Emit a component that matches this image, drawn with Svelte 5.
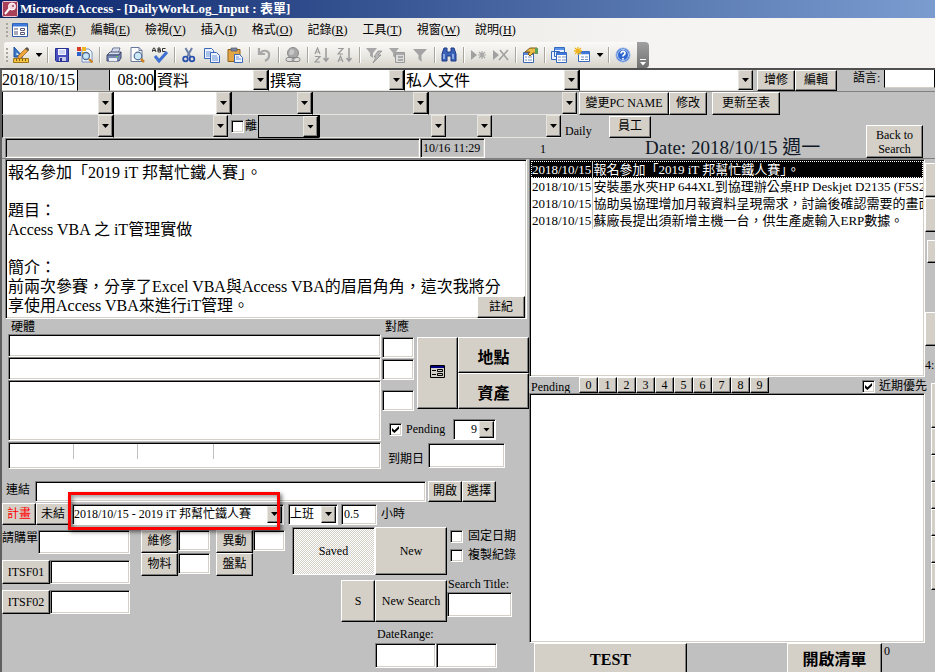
<script lang="ts">
    const menus = [
        ['檔案', 'F'],
        ['編輯', 'E'],
        ['檢視', 'V'],
        ['插入', 'I'],
        ['格式', 'O'],
        ['記錄', 'R'],
        ['工具', 'T'],
        ['視窗', 'W'],
        ['說明', 'H']
    ];

    // '|' is a separator, 'v' the small arrow beside a split button
    const tools = [
        'design', 'v', '|', 'save', 'find-file', '|', 'print', 'preview', 'spelling', '|', 'cut', 'copy', 'paste', '|',
        'undo', '|', 'link', '|', 'asc', 'desc', '|', 'filter-sel', 'filter-form', 'filter', '|', 'binoculars', '|',
        'new-record', 'delete-record', '|', 'properties', '|', 'window', 'new-object', 'v', '|', 'help'
    ];

    const icons: Record<string, string> = {
        design: '<path d="M1 0v10h9z" fill="#3a78c8" stroke="#1c4f9c"/><path d="M3.500 5.500v2.500h2.500z" fill="#fff"/><path d="M5 9l8-8 3 2-8 8-3 1z" fill="#f0a63c" stroke="#8a5a1c" stroke-width=".7"/><path d="M12 2l2-2 2 2-1 2z" fill="#555"/><path d="M.5 11.500h15v4H.5z" fill="#f5c542" stroke="#a0761c"/><path d="M3.500 12v2m3-2v2m3-2v2m3-2v2" stroke="#7b5a14"/>',
        save: '<path d="M1.500 1.500h13v13h-12l-1-1z" fill="#4a50c0" stroke="#26308e"/><path d="M4 2h8v6H4z" fill="#f4f6ff"/><path d="M5 4h6M5 6h6" stroke="#aab4e4"/><path d="M5 10h7v4H5z" fill="#c7cbe8"/><path d="M6 11h2v3H6z" fill="#26308e"/>',
        'find-file': '<path d="M5 2h7l3 3v10H5z" fill="#f7fbff" stroke="#7090c0"/><path d="M0 0h4v4H0z" fill="#d93a21"/><path d="M5 0h4v4H5z" fill="#f5b51f"/><path d="M0 5h4v4H0z" fill="#2c62c9"/><path d="M5 5h3v3H5z" fill="#f5b51f"/><circle cx="9" cy="9" r="3.500" fill="#c7e6f7" stroke="#526e96" stroke-width="1.300"/><path d="M12 12l3.500 3.500" stroke="#c98322" stroke-width="2.400"/>',
        print: '<path d="M5 6l2-5h7l-2 5z" fill="#fff" stroke="#5e6c94"/><path d="M7 3h5M6.500 5h5" stroke="#8fa0cc" stroke-width=".8"/><path d="M1 8l3-3h11l-2 3z" fill="#d9deee" stroke="#4d5878"/><path d="M1 8h12l2-3v6l-2 3H1z" fill="#7b89b5" stroke="#3d4a70"/><path d="M3 11h8v3H3z" fill="#e9edf8"/><path d="M10 9h2v1h-2z" fill="#58d846"/>',
        preview: '<path d="M2 .5h8l3 3v11H2z" fill="#fff" stroke="#68789c"/><path d="M10 .5v3h3" fill="none" stroke="#68789c"/><circle cx="9" cy="9" r="3.800" fill="#cbe9f8" stroke="#526e96" stroke-width="1.200"/><path d="M12 12l3 3" stroke="#c98322" stroke-width="2.500"/>',
        spelling: '<path d="M0 5l1.500-4h1L4 5M1 3.500h2M6 1v4h2.500V3H6h2V1zM13.500 1.500h-3v3h3" fill="none" stroke="#333"/><path d="M3 9l4 5 8-9" fill="none" stroke="#3f6fd0" stroke-width="3"/>',
        cut: '<path d="M4.500 1l5 9M11 1L6 10" stroke="#6b7fa8" stroke-width="2"/><circle cx="4.500" cy="12" r="2.300" fill="none" stroke="#2a50ad" stroke-width="1.800"/><circle cx="11" cy="12" r="2.300" fill="none" stroke="#2a50ad" stroke-width="1.800"/>',
        copy: '<path d="M.5 1.500h7l2 2v8h-9z" fill="#eef4ff" stroke="#3968b8"/><path d="M2 5h5M2 7h5M2 9h4" stroke="#6b94d8"/><path d="M6.500 5.500h6l3 3v7h-9z" fill="#eef4ff" stroke="#3968b8"/><path d="M8 9h5M8 11h6M8 13h6" stroke="#6b94d8"/>',
        paste: '<path d="M1 2.500h12v12H1z" fill="#e2a646" stroke="#926014"/><path d="M4 1h6v3H4z" fill="#7b86a0" stroke="#4c566e" stroke-width=".7"/><path d="M7.500 7.500h5l3 3v5h-8z" fill="#eef4ff" stroke="#3968b8"/><path d="M9 10h3M9 12h5" stroke="#6b94d8"/>',
        undo: '<path d="M3 1v6h6" fill="none" stroke="#a8a8a8" stroke-width="2.200"/><path d="M4 7c2-5 10-4 9 2 0 2-2 4-4 5" fill="none" stroke="#a8a8a8" stroke-width="2.200"/>',
        link: '<circle cx="8" cy="6" r="5.500" fill="#a8a8a8" stroke="#8c8c8c"/><path d="M5 3c3-2 5 1 4 3s-3 3-5 1" fill="#c8c8c8"/><rect x="1" y="10.500" width="8" height="4" rx="2" fill="#ddd" stroke="#888"/><rect x="7" y="10.500" width="8" height="4" rx="2" fill="none" stroke="#888"/>',
        asc: '<path d="M1 7l2.500-6L6 7M2 5h3M1 9.500h5L1 15h5" fill="none" stroke="#9a9a9a" stroke-width="1.200"/><path d="M12 1v13M9.500 11l2.500 3 2.500-3" fill="none" stroke="#9a9a9a" stroke-width="1.500"/>',
        desc: '<path d="M1 1.500h5L1 7h5M1 15l2.500-6L6 15M2 13h3" fill="none" stroke="#9a9a9a" stroke-width="1.200"/><path d="M12 1v13M9.500 11l2.500 3 2.500-3" fill="none" stroke="#9a9a9a" stroke-width="1.500"/>',
        'filter-sel': '<path d="M0 1h11L7 6v5l-3-2V6z" fill="#a8a8a8"/><path d="M12 4h4l-4 4h3l-8 8 3-6H8z" fill="#b8b8b8" stroke="#888" stroke-width=".7"/>',
        'filter-form': '<path d="M0 1h10L6 6v5L4 9V6z" fill="#a8a8a8"/><path d="M6.500 5.500h9v10h-9z" fill="#ddd" stroke="#999"/><path d="M7 7h8M9 10h5M9 13h5" stroke="#999" stroke-width="1.500"/>',
        filter: '<path d="M1 2h14L9.500 8v7l-3-3V8z" fill="#a4a4a4"/>',
        binoculars: '<path d="M3 1h3v4h4V1h3l2 6v7h-5V9H6v5H1V7z" fill="#3c62b8" stroke="#1c3a86"/><path d="M3 7v5M12 7v5" stroke="#a4c0f4" stroke-width="1.500"/>',
        'new-record': '<path d="M1 3l6 5-6 5z" fill="#a0a0a0"/><path d="M12 4v8M8 8h8M9 5l6 6M15 5l-6 6" stroke="#a8a8a8" stroke-width="1.200"/>',
        'delete-record': '<path d="M0 3l6 5-6 5z" fill="#a0a0a0"/><path d="M7 3l8 10M15 3L6 13" stroke="#a0a0a0" stroke-width="1.600"/>',
        properties: '<path d="M1.500 5.500h10v10h-10z" fill="#fff" stroke="#3b66b0"/><path d="M2 7h9" stroke="#5b8ade" stroke-width="2"/><path d="M3 10h2M6 10h4M3 13h2M6 13h4" stroke="#7590bd"/><path d="M3 5l5-4h7v5h-4l-3 3-2-2 2-2z" fill="#e9bd48" stroke="#805d18"/><path d="M13 1h3v6h-3z" fill="#61a05a"/>',
        window: '<path d="M.5 4.500h8v8h-8zM3.500 .500h10v9h-10z" fill="#eaf3ff" stroke="#3569bd"/><path d="M4 2h9" stroke="#5b93e8" stroke-width="2"/><path d="M5.500 5.500h10v10h-10z" fill="#fff" stroke="#3569bd"/><path d="M6 7h9" stroke="#3f79dc" stroke-width="2"/><path d="M7 10h3M11 10h4M7 13h3M11 13h4" stroke="#7590bd"/>',
        'new-object': '<path d="M4.500 4.500h11v10h-11z" fill="#fff" stroke="#3569bd"/><path d="M5 6h10" stroke="#3f79dc" stroke-width="2.500"/><path d="M7 10h3M11 10h3M7 12.500h3M11 12.500h3" stroke="#7590bd"/><path d="M4 0v8M0 4h8M1 1l6 6M7 1L1 7" stroke="#f2b51c" stroke-width="1.300"/>',
        help: '<circle cx="8" cy="8" r="7" fill="#2e66d0" stroke="#94b4ea"/><circle cx="8" cy="8" r="5.500" fill="none" stroke="#fff" stroke-width=".7"/><path d="M6 6.500c0-3 4.500-2.500 4 0C9.700 8 8 8 8 9.500M8 11v1.500" fill="none" stroke="#fff" stroke-width="1.700"/>'
    };

    const memo = `報名參加「2019 iT 邦幫忙鐵人賽」。

題目：
Access VBA 之 iT管理實做

簡介：
前兩次參賽，分享了Excel VBA與Access VBA的眉眉角角，這次我將分享使用Access VBA來進行iT管理。`;

    const logs = [
        { date: '2018/10/15', title: '報名參加「2019 iT 邦幫忙鐵人賽」。' },
        { date: '2018/10/15', title: '安裝墨水夾HP 644XL到協理辦公桌HP Deskjet D2135 (F5S29' },
        { date: '2018/10/15', title: '協助吳協理增加月報資料呈現需求，討論後確認需要的畫面' },
        { date: '2018/10/15', title: '蘇廠長提出須新增主機一台，供生產處輸入ERP數據。' }
    ];

    let selected = $state(0);
</script>

{#snippet combo(label: string, value: string, kind: string = '')}
    <div class="combo {kind}">
        <select aria-label={label}><option>{value}</option></select>
        <span class="arrow"></span>
    </div>
{/snippet}

<div class="app">
    <header class="titlebar">
        <svg viewBox="0 0 16 16" width="16" height="16">
            <rect x=".5" y=".5" width="15" height="15" rx="1" fill="#a8405a" stroke="#f0c8d0" />
            <path d="M3 13l5-6" stroke="#fff" stroke-width="2" />
            <circle cx="10" cy="5.500" r="3.500" fill="#f8d8e0" stroke="#fff" />
            <circle cx="11" cy="5" r="1" fill="#a8405a" />
        </svg>
        <h1>Microsoft Access - [DailyWorkLog_Input : 表單]</h1>
    </header>

    <nav class="menubar">
        <span class="grip"></span>
        <svg viewBox="0 0 16 14" width="16" height="14">
            <path d="M.5 .5h15v13H.5z" fill="#fff" stroke="#2a5aa8" />
            <path d="M1 2h14" stroke="#3f79dc" stroke-width="3" />
            <path d="M2 6h4M2 9h4M2 11h4" stroke="#557" />
            <path d="M8.500 5.500h4v2h-4zM8.500 9.500h4v2h-4z" fill="none" stroke="#557" />
        </svg>
        {#each menus as [name, key]}
            <button class="menu">{name}(<u>{key}</u>)</button>
        {/each}
    </nav>

    <div class="toolbar">
        <div class="tools">
            <span class="grip"></span>
            {#each tools as tool}
                {#if tool === '|'}
                    <span class="sep"></span>
                {:else if tool === 'v'}
                    <button class="drop" aria-label="more"></button>
                {:else}
                    <button class="tool" aria-label={tool}>
                        <svg viewBox="0 0 16 16" width="16" height="16">{@html icons[tool]}</svg>
                    </button>
                {/if}
            {/each}
            <button class="overflow" aria-label="toolbar options"></button>
        </div>
    </div>

    <main>
        <section class="head">
            <div class="row row-1">
                <input class="flat" aria-label="date" value="2018/10/15" />
                <input class="flat gray" aria-label="weekday" />
                <input class="flat right" aria-label="time" value="08:00" />
                {@render combo('type', '資料', 'big')}
                {@render combo('action', '撰寫', 'big')}
                {@render combo('subject', '私人文件', 'big')}
                {@render combo('detail', '', 'big')}
                <div class="tail">
                    <button class="btn w-38">增修</button>
                    <button class="btn w-42">編輯</button>
                    <label for="lang">語言:</label>
                    <input id="lang" class="flat" />
                </div>
            </div>
            <div class="row row-2">
                {@render combo('field 1', '')}
                {@render combo('field 2', '')}
                {@render combo('field 3', '', 'gray')}
                {@render combo('field 4', '', 'gray')}
                {@render combo('field 5', '', 'gray')}
                <div class="tail">
                    <button class="btn w-90">變更PC NAME</button>
                    <button class="btn w-38">修改</button>
                    <button class="btn w-68">更新至表</button>
                </div>
            </div>
            <div class="lower">
                <div>
                    <div class="row row-3">
                        {@render combo('field 6', '', 'gray')}
                        {@render combo('field 7', '', 'gray')}
                        <label class="leave"><input type="checkbox" />離</label>
                        {@render combo('leave type', '', 'gray framed')}
                        {@render combo('field 8', '', 'gray')}
                        {@render combo('field 9', '', 'gray open-left')}
                        {@render combo('field 10', '', 'gray open-left')}
                    </div>
                    <div class="row row-4">
                        <input class="sunken gray" aria-label="path" />
                        <input class="sunken gray" aria-label="modified" value="10/16 11:29" />
                        <span>1</span>
                    </div>
                </div>
                <div class="daily">
                    <div class="daily-top">
                        <span>Daily</span>
                        <button class="btn w-42">員工</button>
                    </div>
                    <p class="today">Date: 2018/10/15 週一</p>
                </div>
                <button class="btn back">Back to Search</button>
            </div>
        </section>

        <div class="body">
            <section class="left">
                <div class="memo">
                    <textarea class="sunken" aria-label="memo" value={memo}></textarea>
                    <button class="btn note">註紀</button>
                </div>

                <div class="gear">
                    <div class="stack">
                        <label for="hw">硬體</label>
                        <input id="hw" class="sunken" />
                        <input class="sunken" aria-label="hardware 2" />
                        <div class="sunken gear-list"></div>
                        <div class="sunken gear-cols">
                            <table><tbody><tr><td></td><td></td><td></td><td></td></tr></tbody></table>
                        </div>
                    </div>
                    <div class="side">
                        <label for="map1">對應</label>
                        <div class="side-top">
                            <div class="maps">
                                <input id="map1" class="sunken" />
                                <input class="sunken" aria-label="map 2" />
                                <input class="sunken" aria-label="map 3" />
                            </div>
                            <button class="btn form-btn" aria-label="open form">
                                <svg viewBox="0 0 15 13" width="15" height="13">
                                    <path d="M.5 .5h14v12H.5z" fill="#d4d0c8" stroke="#000" />
                                    <path d="M1 2h13" stroke="#000080" stroke-width="2" />
                                    <path d="M2 5.500h4M2 9.500h4" stroke="#000" />
                                    <path d="M7.500 4.500h5v2h-5zM7.500 8.500h5v2h-5z" fill="none" stroke="#000" />
                                </svg>
                            </button>
                            <div class="places">
                                <button class="btn strong">地點</button>
                                <button class="btn strong">資產</button>
                            </div>
                        </div>
                        <div class="pending">
                            <label><input type="checkbox" checked />Pending</label>
                            {@render combo('priority', '9', 'boxed right')}
                        </div>
                        <div class="due">
                            <label for="due">到期日</label>
                            <input id="due" class="sunken" />
                        </div>
                    </div>
                </div>

                <div class="link">
                    <label for="url">連結</label>
                    <input id="url" class="sunken" />
                    <button class="btn w-34">開啟</button>
                    <button class="btn w-34">選擇</button>
                </div>

                <div class="plan">
                    <button class="btn w-34 red">計畫</button>
                    <button class="btn w-34">未結</button>
                    <div class="marked">
                        {@render combo('plan', '2018/10/15 - 2019 iT 邦幫忙鐵人賽', 'boxed')}
                        <span class="marker"></span>
                    </div>
                    {@render combo('shift', '上班', 'boxed shift')}
                    <input id="hours" class="sunken" value="0.5" />
                    <label for="hours">小時</label>
                </div>

                <div class="bottom">
                    <div class="orders">
                        <label for="order">請購單</label>
                        <input id="order" class="sunken" />
                        <button class="btn">ITSF01</button>
                        <input class="sunken" aria-label="ITSF01" />
                        <button class="btn">ITSF02</button>
                        <input class="sunken" aria-label="ITSF02" />
                    </div>
                    <div class="jobs">
                        <button class="btn">維修</button>
                        <input class="sunken" aria-label="維修" />
                        <button class="btn">異動</button>
                        <input class="sunken" aria-label="異動" />
                        <button class="btn">物料</button>
                        <input class="sunken" aria-label="物料" />
                        <button class="btn">盤點</button>
                    </div>
                    <div class="actions">
                        <button class="btn saved">Saved</button>
                        <button class="btn">New</button>
                        <div class="checks">
                            <label><input type="checkbox" />固定日期</label>
                            <label><input type="checkbox" />複製紀錄</label>
                        </div>
                        <button class="btn s-btn">S</button>
                        <button class="btn">New Search</button>
                        <div class="search">
                            <label for="search">Search Title:</label>
                            <input id="search" class="sunken" />
                        </div>
                        <div class="range">
                            <label for="from">DateRange:</label>
                            <div>
                                <input id="from" class="sunken" />
                                <input class="sunken" aria-label="to" />
                            </div>
                        </div>
                    </div>
                </div>
            </section>

            <section class="records">
                <div class="sunken log">
                    <table>
                        <tbody>
                            {#each logs as log, i}
                                <tr class:selected={i === selected} onclick={() => (selected = i)}>
                                    <td>{log.date}</td>
                                    <td>{log.title}</td>
                                </tr>
                            {/each}
                        </tbody>
                    </table>
                </div>
                <div class="strip">
                    <span>Pending</span>
                    {#each Array(10) as _, n}
                        <button class="btn num">{n}</button>
                    {/each}
                    <label><input type="checkbox" checked />近期優先</label>
                </div>
                <div class="sunken queue"></div>
                <div class="footer">
                    <button class="btn strong test">TEST</button>
                    <button class="btn strong open">開啟清單</button>
                    <span>0</span>
                </div>
            </section>

            <aside class="edge">
                <button class="btn" aria-label="side 1"></button>
                <button class="btn" aria-label="side 2"></button>
                <button class="btn short" aria-label="side 3"></button>
                <button class="btn apart" aria-label="side 4"></button>
                <span>4:</span>
                <button class="btn thin tall" aria-label="side 5"></button>
                {#each Array(6) as _, n}
                    <button class="btn thin" aria-label="side {n + 6}"></button>
                {/each}
            </aside>
        </div>
    </main>
</div>

<style>
    :global(body) {
        margin: 0;
        background: #c0c0c0;
    }

    .app {
        min-height: 100vh;
        display: flex;
        flex-direction: column;
        overflow: hidden;
        font-family: "Liberation Serif", "Noto Sans CJK TC", serif;
        font-size: 12px;
        line-height: 15px;
        color: #000;
        background: #c0c0c0;
    }

    .app * {
        box-sizing: border-box;
    }

    button, input, select, textarea {
        font: inherit;
        color: inherit;
        margin: 0;
        padding: 0;
        border: 0;
        border-radius: 0;
        background: none;
        min-width: 0;
        outline: none;
    }

    label, button {
        white-space: nowrap;
    }

    .titlebar {
        display: flex;
        align-items: center;
        gap: 2px;
        height: 18px;
        padding-left: 2px;
        background: linear-gradient(90deg, #0a246a, #7a9ccf);
    }

    h1 {
        margin: 0;
        color: #fff;
        font-size: 13px;
        line-height: 18px;
    }

    .menubar {
        display: flex;
        align-items: center;
        height: 24px;
        padding-left: 6px;
        background: linear-gradient(90deg, #dcd9d2, #f5f4f2 70%);
    }

    .grip {
        width: 2px;
        height: 14px;
        background: repeating-linear-gradient(#a8a59c 0 2px, transparent 2px 4px);
    }

    .menubar svg {
        margin: 0 1px 0 4px;
    }

    .menu {
        padding: 0 8px;
        height: 20px;
        line-height: 20px;
    }

    .menu + .menu {
        padding-left: 7px;
    }

    .toolbar {
        height: 28px;
        padding-left: 4px;
        background: linear-gradient(90deg, #dcd9d2, #f5f4f2 70%);
        border-bottom: 2px solid #505050;
    }

    .tools {
        display: flex;
        align-items: center;
        width: max-content;
        height: 26px;
        padding-left: 2px;
        border-radius: 3px;
        background: linear-gradient(#fbfaf8, #ebe9e4 50%, #d6d3cb);
    }

    .tools .grip {
        margin-right: 2px;
    }

    .tool {
        width: 23px;
        height: 22px;
        padding: 3px;
    }

    .tool svg {
        display: block;
    }

    .sep {
        width: 1px;
        height: 16px;
        margin-right: 3px;
        margin-left: 2px;
        background: #a8a59c;
        box-shadow: 1px 0 #fff;
    }

    .drop {
        width: 12px;
        height: 22px;
    }

    .drop::before, .arrow::before {
        content: '';
        display: block;
        margin: auto;
        width: 7px;
        height: 4px;
        background: #000;
        clip-path: polygon(0 0, 100% 0, 50% 100%);
    }

    .overflow {
        width: 12px;
        height: 26px;
        margin-left: 2px;
        padding-top: 14px;
        border-radius: 0 4px 4px 0;
        background: linear-gradient(#a0a0a0, #707070);
    }

    .overflow::before {
        content: '';
        display: block;
        margin: auto;
        width: 6px;
        height: 7px;
        background: #fff;
        clip-path: polygon(0 0, 100% 0, 100% 20%, 0 20%, 0 50%, 100% 50%, 50% 100%, 0 50%);
    }

    main {
        flex: 1;
        display: flex;
        flex-direction: column;
        border-left: 2px solid #606060;
    }

    .sunken {
        background: #fff;
        border: 1px solid;
        border-color: #808080 #fff #fff #808080;
        box-shadow: inset 1px 1px #000, inset -1px -1px #d4d0c8;
        padding: 0 2px;
    }

    .flat {
        background: #fff;
        border-right: 1px solid #000;
        border-bottom: 1px solid #d4d0c8;
        font-size: 16px;
    }

    .btn {
        background: #d4d0c8;
        border: 1px solid;
        border-color: #fff #000 #000 #fff;
        box-shadow: inset -1px -1px #808080;
        padding: 0;
        flex: none;
    }

    .w-34 { width: 34px; }
    .w-38 { width: 38px; }
    .w-42 { width: 42px; }
    .w-68 { width: 68px; }
    .w-90 { width: 90px; }

    .strong {
        font-size: 16px;
        line-height: 20px;
        font-weight: bold;
    }

    input[type='checkbox'] {
        appearance: none;
        flex: none;
        width: 13px;
        height: 13px;
        background: #fff;
        border: 1px solid;
        border-color: #808080 #fff #fff #808080;
        box-shadow: inset 1px 1px #000, inset -1px -1px #d4d0c8;
    }

    input[type='checkbox']:checked::before {
        content: '';
        display: block;
        width: 7px;
        height: 7px;
        margin: 2px;
        background: #000;
        clip-path: polygon(0 30%, 35% 60%, 100% 0, 100% 38%, 35% 100%, 0 70%);
    }

    .combo {
        display: grid;
        grid-template-columns: minmax(0, 1fr) 15px;
        grid-template-rows: minmax(0, 1fr);
        background: #fff;
        border-left: 1px solid #000;
        border-bottom: 1px solid #e8e6e0;
        min-width: 0;
    }

    .combo select {
        appearance: none;
        grid-area: 1 / 1 / 2 / 3;
        padding: 0 17px 0 1px;
    }

    .arrow {
        grid-area: 1 / 2;
        display: flex;
        align-items: center;
        pointer-events: none;
        background: #d4d0c8;
        border: 1px solid;
        border-color: #e8e6e0 #000 #000 #e8e6e0;
        box-shadow: inset -1px -1px #808080;
    }

    .big select {
        font-size: 16px;
    }

    .right, .right select {
        text-align: right;
    }

    .gray {
        background: #c0c0c0;
    }

    .open-left {
        border-left-color: #c0c0c0;
    }

    .framed {
        border: 1px solid #000;
    }

    .boxed {
        border: 1px solid;
        border-color: #808080 #fff #fff #808080;
        box-shadow: inset 1px 1px #000;
        padding: 1px;
    }

    .boxed select {
        padding-left: 0;
    }

    .row {
        display: grid;
    }

    .row-1 {
        height: 22px;
        grid-template-columns: 76px 32px 45px 113fr 136fr 175fr 174fr 182px;
        border-bottom: 1px solid #808080;
    }

    .row-2 {
        height: 23px;
        grid-template-columns: 111fr 118fr 81fr 116fr 149fr 358px;
    }

    .tail {
        display: flex;
        padding-left: 4px;
    }

    .row-2 .tail {
        padding-left: 2px;
    }

    .row-1 label {
        margin: 0 4px 0 16px;
        padding-top: 1px;
    }

    .tail .flat {
        flex: 1;
        height: 18px;
        border-left: 1px solid #000;
    }

    .row-2 .w-68 {
        margin-left: 5px;
    }

    .lower {
        display: grid;
        grid-template-columns: 559fr 305px 57px 12px;
        height: 43px;
    }

    .row-3 {
        height: 23px;
        grid-template-columns: 111fr 115fr 30px 61px 127fr 46px 69fr;
    }

    .leave {
        display: flex;
        align-items: center;
        gap: 1px;
        padding-left: 3px;
    }

    .row-4 {
        height: 20px;
        grid-template-columns: 415fr 65px 76px;
        padding-left: 3px;
    }

    .row-4 span {
        padding: 4px 0 0 55px;
    }

    .daily-top {
        display: flex;
        align-items: center;
        height: 23px;
        padding-left: 4px;
    }

    .daily-top span {
        width: 44px;
        padding-top: 9px;
    }

    .daily-top .btn {
        height: 22px;
    }

    .today {
        margin: 0 0 0 84px;
        font-size: 19px;
        line-height: 19px;
        white-space: nowrap;
        color: #101828;
    }

    .back {
        margin-top: 10px;
        line-height: 14px;
        white-space: normal;
    }

    .body {
        flex: 1;
        display: grid;
        grid-template-columns: minmax(0, 527fr) minmax(0, 396fr) 10px;
        border-top: 1px solid #808080;
    }

    .left {
        display: flex;
        flex-direction: column;
    }

    .memo {
        position: relative;
        height: 160px;
        margin: 0 2px 0 3px;
    }

    .memo textarea {
        display: block;
        width: 100%;
        height: 100%;
        padding: 3px 24px 0 2px;
        font-size: 16px;
        line-height: 19px;
        resize: none;
        overflow: hidden;
    }

    .note {
        position: absolute;
        right: 2px;
        bottom: 1px;
        width: 48px;
        height: 22px;
    }

    .gear {
        display: grid;
        grid-template-columns: minmax(0, 1fr) 147px;
        gap: 1px;
        padding-left: 6px;
    }

    .stack {
        display: flex;
        flex-direction: column;
    }

    .stack label, .side > label {
        height: 15px;
        padding: 1px 0 0 3px;
    }

    .stack input {
        height: 23px;
    }

    .gear-list {
        height: 61px;
        margin-bottom: 1px;
    }

    .gear-cols {
        height: 27px;
        padding: 1px 0;
    }

    .gear-cols table {
        width: 100%;
        table-layout: fixed;
        border-collapse: collapse;
    }

    .gear-cols td {
        width: 64px;
        height: 15px;
        padding: 0;
        border-right: 1px solid #c0c0c0;
    }

    .gear-cols td:nth-child(3) {
        width: 76px;
    }

    .gear-cols td:last-child {
        width: auto;
        border: 0;
    }

    .side {
        display: flex;
        flex-direction: column;
    }

    .side-top {
        display: flex;
        height: 72px;
        margin-top: 3px;
    }

    .maps {
        display: flex;
        flex-direction: column;
        gap: 1px;
        width: 32px;
        margin-right: 3px;
    }

    .maps input {
        flex: none;
        height: 21px;
    }

    .maps input:last-child {
        margin-top: 9px;
    }

    .form-btn {
        width: 41px;
    }

    .places {
        flex: 1;
        display: flex;
        flex-direction: column;
    }

    .places .btn {
        flex: 1;
        padding-top: 5px;
    }

    .pending, .due {
        display: flex;
        align-items: center;
    }

    .pending {
        height: 21px;
        margin-top: 10px;
        padding-left: 7px;
    }

    .pending label {
        display: flex;
        align-items: center;
        gap: 4px;
        width: 64px;
    }

    .pending .combo {
        width: 43px;
        height: 21px;
    }

    .due {
        height: 25px;
        margin-top: 3px;
        padding-left: 6px;
    }

    .due label {
        width: 40px;
        padding-top: 8px;
    }

    .due input {
        width: 77px;
        height: 25px;
    }

    .link {
        display: flex;
        height: 21px;
        margin: 12px 33px 0 0;
    }

    .link label {
        width: 33px;
        padding: 2px 0 0 4px;
    }

    .link input {
        flex: 1;
        margin-right: 2px;
    }

    .plan {
        display: flex;
        align-items: center;
        height: 24px;
    }

    .plan > .btn {
        height: 22px;
    }

    .red {
        color: #f00;
    }

    .marked {
        position: relative;
        width: 212px;
        margin: 0 4px 0 2px;
    }

    .plan .combo {
        height: 21px;
    }

    .marker {
        position: absolute;
        inset: -12px 4px -5px -4px;
        border: 3px solid #f00;
        box-shadow: 2px 2px 4px #0008, inset 2px 2px 4px #0006;
        pointer-events: none;
    }

    .shift {
        width: 50px;
        margin-right: 3px;
    }

    .plan input {
        width: 36px;
        height: 21px;
    }

    .plan label {
        margin-left: 4px;
    }

    .bottom {
        display: grid;
        grid-template-columns: 128px 145px 1fr;
        column-gap: 11px;
        padding-top: 1px;
    }

    .orders {
        display: grid;
        grid-template-columns: 48px 80px;
        grid-auto-rows: 24px;
        row-gap: 6px;
        align-content: start;
        padding-top: 3px;
    }

    .orders label {
        padding-top: 1px;
    }

    #order {
        margin-left: -12px;
    }

    .jobs {
        display: grid;
        grid-template-columns: 37px 38px 37px 32px;
        grid-auto-rows: 23px;
        align-content: start;
        padding-top: 3px;
    }

    .jobs input {
        width: 32px;
        height: 21px;
    }

    .actions {
        display: grid;
        grid-template-columns: 78px 72px 1fr;
        grid-template-rows: 48px 42px auto;
        row-gap: 5px;
    }

    .saved {
        margin-left: -5px;
        border-color: #808080 #fff #fff #808080;
        box-shadow: inset 1px 1px #000;
        background: repeating-conic-gradient(#fff 0 25%, #d4d0c8 0 50%) 0 0 / 2px 2px;
    }

    .s-btn {
        width: 34px;
        justify-self: end;
    }

    .checks label {
        display: flex;
        align-items: center;
        gap: 5px;
        height: 19px;
        padding-left: 3px;
    }

    .search {
        display: flex;
        flex-direction: column;
        align-items: start;
        margin-top: -3px;
    }

    .search label {
        padding-left: 1px;
    }

    .search input {
        width: 65px;
        height: 25px;
    }

    .range {
        grid-column: 2 / 4;
    }

    .range label {
        padding-left: 2px;
    }

    .range div {
        display: flex;
        margin-top: 1px;
    }

    .range input {
        width: 61px;
        height: 25px;
    }

    .records {
        display: flex;
        flex-direction: column;
    }

    .log {
        height: 218px;
        padding: 1px;
        overflow: hidden;
    }

    .log table {
        width: 100%;
        table-layout: fixed;
        border-collapse: collapse;
        font-size: 13px;
        line-height: 17px;
    }

    .log td {
        height: 17px;
        padding: 0 0 0 1px;
        overflow: hidden;
        white-space: nowrap;
    }

    .log td:first-child {
        width: 61px;
        border-right: 1px solid #c0c0c0;
    }

    .selected {
        color: #fff;
        background: #000;
        outline: 1px dotted #fff;
        outline-offset: -1px;
    }

    .strip {
        display: flex;
        height: 16px;
    }

    .strip span {
        width: 50px;
        padding: 3px 0 0 2px;
    }

    .num {
        width: 19px;
        line-height: 13px;
    }

    .strip label {
        display: flex;
        align-items: center;
        gap: 4px;
        margin: 3px -2px 0 auto;
    }

    .queue {
        flex: 1;
        min-height: 120px;
    }

    .footer {
        display: flex;
        height: 29px;
        padding-left: 5px;
    }

    .footer .btn {
        border-bottom: 0;
        box-shadow: inset -1px 0 #808080;
        padding-top: 4px;
    }

    .test {
        width: 153px;
    }

    .open {
        width: 95px;
        margin-left: auto;
    }

    .footer span {
        width: 43px;
        padding: 1px 0 0 2px;
    }

    .edge {
        display: flex;
        flex-direction: column;
        padding-top: 4px;
        overflow: hidden;
    }

    .edge .btn {
        width: 20px;
        height: 34px;
        margin-bottom: 1px;
        border-right: 0;
    }

    .edge .short {
        height: 23px;
        margin: 7px 0 0 2px;
    }

    .edge .apart {
        margin: 49px 0 0;
    }

    .edge span {
        padding: 12px 0 10px;
        white-space: nowrap;
    }

    .edge .thin {
        height: 27px;
        margin: 0 0 0 6px;
    }

    .edge .tall {
        height: 45px;
    }
</style>
